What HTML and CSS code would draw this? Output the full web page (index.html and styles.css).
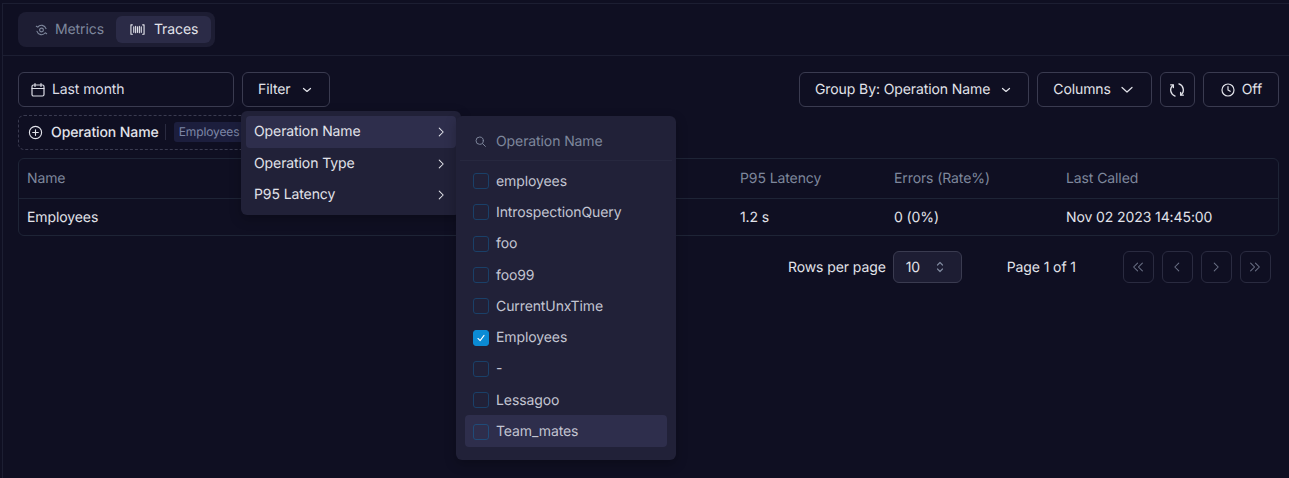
FILE: index.html
```html
<!DOCTYPE html>
<html lang="en">
<head>
  <meta charset="UTF-8" />
  <title>Analytics - Traces</title>
  <link rel="stylesheet" href="styles.css">
</head>
<body>
  <div class="page">
    <div class="tab-row">
      <div class="tabs">
        <div class="tab">
          <svg class="ico" viewBox="0 0 16 16"><circle cx="8" cy="8.500" r="2"/><path d="M2.500 4.500L4 5.500A5 5 0 0 1 12.800 7M13.500 12.500L12 11.500A5 5 0 0 1 3.200 10"/></svg>
          Metrics
        </div>
        <div class="tab active">
          <svg class="ico" viewBox="0 0 16 16"><path d="M2.500 3H1v10h1.500M13.500 3H15v10h-1.500M4 5v6M6 4.500v7M8 5v6M10 4.500v7M12 5v6"/></svg>
          Traces
        </div>
      </div>
    </div>

    <div class="content">
      <div class="toolbar">
        <div class="btn date-btn">
          <svg class="ico" viewBox="0 0 16 16"><rect x="2" y="3" width="12" height="11" rx="1.500"/><path d="M2 6.500h12M5 1.500v3M11 1.500v3"/></svg>
          Last month
        </div>
        <div class="btn">
          Filter
          <svg class="chev" viewBox="0 0 16 16"><path d="M4.500 6.500L8 9.500l3.500-3"/></svg>
        </div>
        <div class="spacer"></div>
        <div class="btn">
          Group By: Operation Name
          <svg class="chev" viewBox="0 0 16 16"><path d="M4.500 6.500L8 9.500l3.500-3"/></svg>
        </div>
        <div class="btn wide-chev">
          Columns
          <svg class="chev" viewBox="0 0 16 16"><path d="M3 5.500l5 4.500 5-4.500"/></svg>
        </div>
        <div class="btn icon-btn">
          <svg class="ico" viewBox="1 1 14 14"><path d="M4.500 3.800A5.500 5.500 0 0 0 6.300 13.300M11.500 12.200A5.500 5.500 0 0 0 9.700 2.700"/><path d="M2.500 3.500h2.300v2.300M13.500 12.500h-2.300v-2.300"/></svg>
        </div>
        <div class="btn off-btn">
          <svg class="ico" viewBox="0 0 16 16"><circle cx="8" cy="8" r="6"/><path d="M8 4.500V8l2.200 1.300"/></svg>
          Off
        </div>
      </div>

      <div class="chips">
        <div class="chip">
          <svg class="ico plus" viewBox="0 0 16 16"><circle cx="8" cy="8" r="6.500"/><path d="M8 5v6M5 8h6"/></svg>
          <span class="chip-name">Operation Name</span>
          <span class="chip-sep"></span>
          <span class="chip-val">Employees</span>
        </div>
      </div>

      <div class="table">
        <div class="row head">
          <div>Name</div><div>P95 Latency</div><div>Errors (Rate%)</div><div>Last Called</div>
        </div>
        <div class="row">
          <div>Employees</div><div>1.2 s</div><div>0 (0%)</div><div>Nov 02 2023 14:45:00</div>
        </div>
      </div>

      <div class="pager">
        <span class="rows-label">Rows per page</span>
        <div class="select">
          10
          <svg class="updown" viewBox="0 0 12 16"><path d="M3.500 6L6 3.500 8.500 6M3.500 10L6 12.500 8.500 10"/></svg>
        </div>
        <span class="page-of">Page 1 of 1</span>
        <div class="pager-btns">
          <div class="pg"><svg viewBox="0 0 16 16"><path d="M7.500 3.500L3 8l4.500 4.500M13 3.500L8.500 8l4.500 4.500"/></svg></div>
          <div class="pg"><svg viewBox="0 0 16 16"><path d="M10 3.500L5.500 8l4.500 4.500"/></svg></div>
          <div class="pg"><svg viewBox="0 0 16 16"><path d="M6 3.500L10.500 8 6 12.500"/></svg></div>
          <div class="pg"><svg viewBox="0 0 16 16"><path d="M3 3.500L7.500 8 3 12.500M8.500 3.500L13 8l-4.500 4.500"/></svg></div>
        </div>
      </div>
    </div>
  </div>

  <div class="menu">
    <div class="menu-item on">Operation Name<svg viewBox="0 0 16 16"><path d="M6 3.500L10.500 8 6 12.500"/></svg></div>
    <div class="menu-item">Operation Type<svg viewBox="0 0 16 16"><path d="M6 3.500L10.500 8 6 12.500"/></svg></div>
    <div class="menu-item">P95 Latency<svg viewBox="0 0 16 16"><path d="M6 3.500L10.500 8 6 12.500"/></svg></div>
  </div>

  <div class="submenu">
    <div class="search">
      <svg viewBox="0 0 16 16"><circle cx="7" cy="7" r="4.500"/><path d="M10.500 10.500L14 14"/></svg>
      Operation Name
    </div>
    <div class="options">
      <div class="opt"><span class="box"></span>employees</div>
      <div class="opt"><span class="box"></span>IntrospectionQuery</div>
      <div class="opt"><span class="box"></span>foo</div>
      <div class="opt"><span class="box"></span>foo99</div>
      <div class="opt"><span class="box"></span>CurrentUnxTime</div>
      <div class="opt"><span class="box checked"><svg viewBox="0 0 16 16"><path d="M4.500 8.500L7 11l4.500-6"/></svg></span>Employees</div>
      <div class="opt"><span class="box"></span>-</div>
      <div class="opt"><span class="box"></span>Lessagoo</div>
      <div class="opt hover"><span class="box"></span>Team_mates</div>
    </div>
  </div>
</body>
</html>
```

FILE: styles.css
```css
* {
  box-sizing: border-box;
}

html, body {
  height: 100%;
}

body {
  margin: 0;
  background: #0f0f22;
  color: #e2e3ea;
  font-family: 'Inter', sans-serif;
  font-size: 14px;
  letter-spacing: -0.1px;
  text-rendering: geometricPrecision;
  overflow: hidden;
}

svg {
  fill: none;
  stroke: currentColor;
  stroke-width: 1.2;
  stroke-linecap: round;
  stroke-linejoin: round;
  flex: none;
}

.page {
  margin: 3px 0 0 2px;
  height: 475px;
  border-top: 1px solid #1c1e32;
  border-left: 1px solid #1c1e32;
}

.tab-row {
  height: 52px;
  padding: 8px 15px 0;
  border-bottom: 1px solid #1c1e32;
}

.tabs {
  display: inline-flex;
  height: 35px;
  padding: 4px;
  background: #1d1d33;
  border-radius: 8px;
}

.tab {
  display: flex;
  align-items: center;
  gap: 6px;
  height: 27px;
  padding: 0 12px 1px 12px;
  border-radius: 6px;
  color: #7e879c;
}

.tab .ico {
  width: 15px;
  height: 15px;
  margin-top: 1px;
}

.tab.active {
  background: #2b2b47;
  color: #e2e3ea;
  gap: 9px;
  padding: 0 13px 1px 14px;
}

.content {
  padding: 16px 10px 0 15px;
}

.toolbar {
  display: flex;
  gap: 8px;
}

.spacer {
  flex: 1;
}

.btn {
  display: flex;
  align-items: center;
  height: 35px;
  padding: 0 14px 1px 15px;
  gap: 8px;
  border: 1px solid #3a3b50;
  border-radius: 6px;
  white-space: nowrap;
}

.btn svg {
  margin-top: 1px;
}

.ico {
  width: 16px;
  height: 16px;
}

.chev {
  width: 16px;
  height: 16px;
}

.date-btn {
  width: 216px;
  padding: 0 11px 1px;
  gap: 6px;
  color: #dcdde6;
}

.wide-chev {
  padding-right: 16px;
}

.icon-btn {
  width: 35px;
  padding: 0;
  justify-content: center;
}

.icon-btn svg {
  margin-top: 0;
}

.off-btn {
  gap: 6px;
  padding-left: 16px;
  padding-right: 16px;
}

.chips {
  margin-top: 8px;
}

.chip {
  display: flex;
  align-items: center;
  height: 35px;
  width: 300px;
  padding: 0 9px 1px;
  border: 1px dashed #3a3b50;
  border-radius: 6px;
}

.chip .plus {
  width: 15px;
  height: 15px;
  margin-top: 1px;
}

.chip-name {
  margin-left: 8px;
  font-weight: 500;
}

.chip-sep {
  width: 1px;
  height: 16px;
  margin: 0 8px 0 6px;
  background: #2a2b40;
}

.chip-val {
  padding: 1px 5px 2px;
  border-radius: 3px;
  background: #1c1e3d;
  color: #7d86a6;
  font-size: 12px;
  line-height: 17px;
}

.table {
  margin-top: 8px;
  border: 1px solid #1e2436;
  border-radius: 6px;
}

.row {
  display: grid;
  grid-template-columns: 713px 154px 172px 1fr;
  align-items: center;
  height: 36px;
  padding: 0 8px;
}

.row.head {
  height: 40px;
  padding-bottom: 1px;
  border-bottom: 1px solid #1e2436;
  color: #7e879c;
}

.pager {
  display: flex;
  align-items: center;
  height: 32px;
  margin-top: 15px;
}

.rows-label {
  margin-left: 770px;
}

.select {
  display: flex;
  align-items: center;
  justify-content: space-between;
  width: 69px;
  height: 32px;
  margin-left: 7px;
  padding: 0 15px 0 12px;
  background: #1d1d33;
  border: 1px solid #3a3b50;
  border-radius: 6px;
}

.updown {
  width: 12px;
  height: 16px;
  color: #7e879c;
}

.page-of {
  margin-left: 45px;
}

.pager-btns {
  display: flex;
  gap: 8px;
  margin-left: 47px;
}

.pg {
  display: flex;
  align-items: center;
  justify-content: center;
  width: 31px;
  height: 32px;
  border: 1px solid #2a2b40;
  border-radius: 6px;
  color: #6b7186;
}

.pg svg {
  width: 14px;
  height: 14px;
}

.menu {
  position: absolute;
  left: 241px;
  top: 111px;
  width: 220px;
  height: 104px;
  padding: 5.300px 5px;
  background: #212138;
  border-radius: 6px;
  box-shadow: 0 4px 12px rgba(0, 0, 0, 0.25);
}

.menu-item {
  display: flex;
  align-items: center;
  justify-content: space-between;
  height: 31.500px;
  padding: 0 8px 1px;
  border-radius: 4px;
}

.menu-item.on {
  background: #2e2e4c;
}

.menu-item svg {
  width: 14px;
  height: 14px;
  margin-top: 1px;
}

.submenu {
  position: absolute;
  left: 456px;
  top: 116px;
  width: 220px;
  height: 344px;
  background: #212138;
  border-radius: 6px;
  box-shadow: 0 4px 12px rgba(0, 0, 0, 0.25);
}

.search {
  display: flex;
  align-items: center;
  gap: 9px;
  height: 45px;
  margin: 0 4px;
  padding: 6px 14px 0;
  border-bottom: 1px solid #27283f;
  color: #7e879c;
}

.search svg {
  width: 13px;
  height: 13px;
}

.options {
  padding: 4px 9px;
}

.opt {
  display: flex;
  align-items: center;
  gap: 7px;
  height: 31.300px;
  padding: 1px 8px 0;
  border-radius: 4px;
  color: #c3c5d2;
}

.opt.hover {
  background: #2e2e4c;
}

.box {
  display: flex;
  width: 16px;
  height: 16px;
  border: 1px solid #1a4068;
  border-radius: 3px;
}

.opt.hover .box {
  border-color: #204b78;
}

.box.checked {
  background: #0b8bd4;
  border-color: #0b8bd4;
  color: #fff;
}
```
